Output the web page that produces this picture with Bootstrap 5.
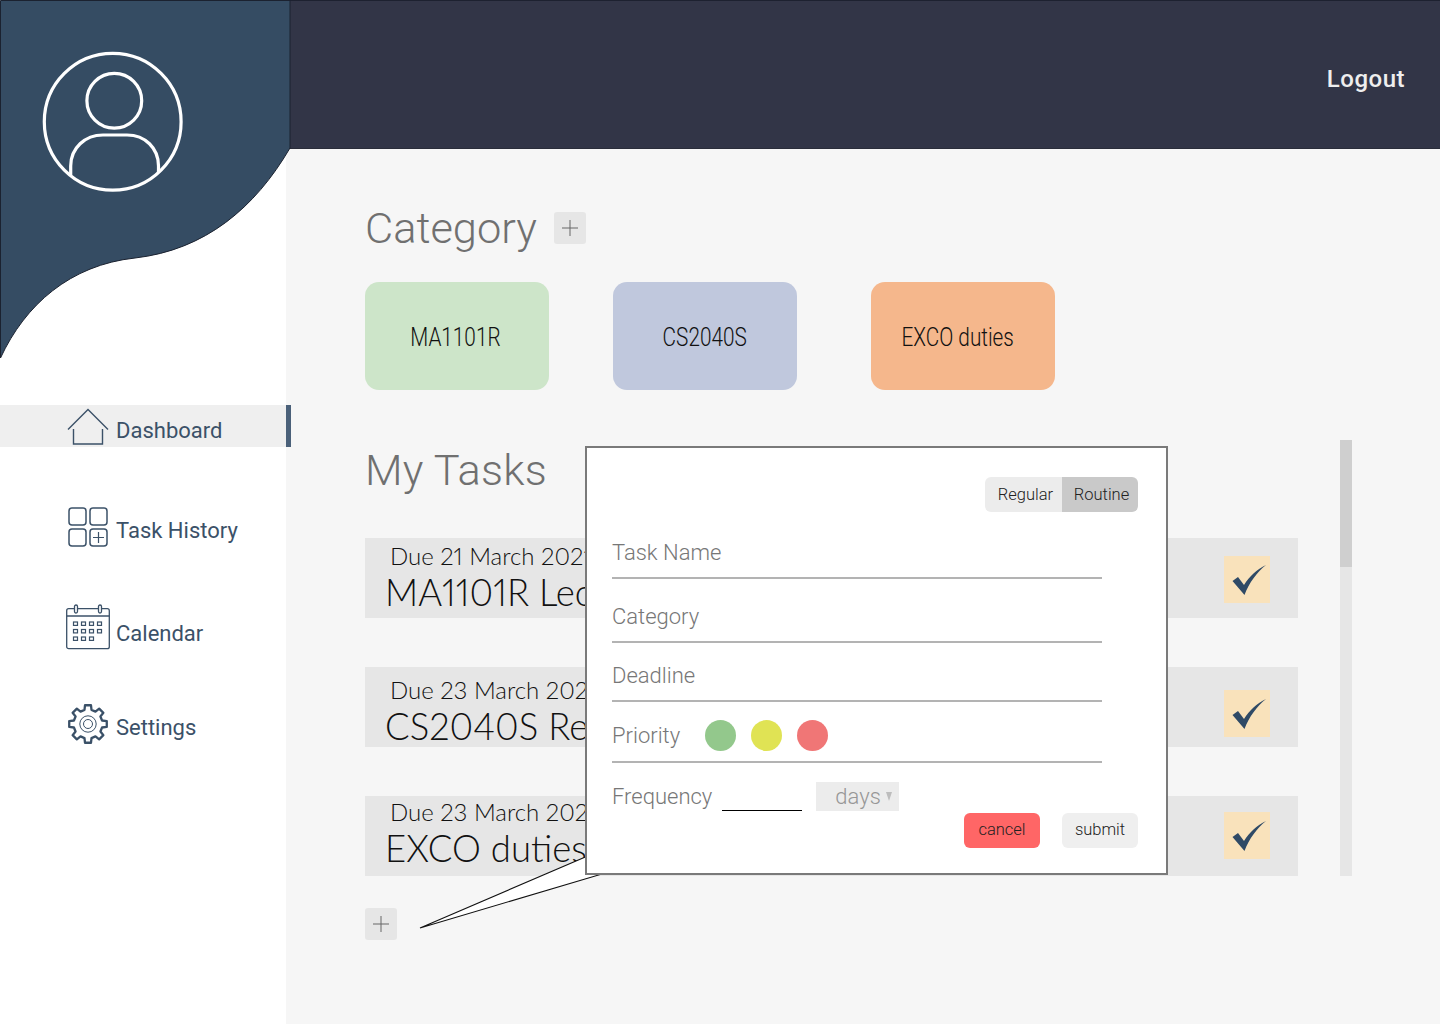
<!DOCTYPE html>
<html lang="en">
<head>
<meta charset="utf-8">
<title>Dashboard</title>
<link href="https://cdn.jsdelivr.net/npm/bootstrap@5.3.0/dist/css/bootstrap.min.css" rel="stylesheet">
<style>
html,body{height:1024px;overflow:hidden}
body{font-family:Roboto,"Liberation Sans",sans-serif;background:#fff}
.shell{height:1024px}
.side{width:286px;flex:none;padding-top:405px;background:#fff}
.blob{position:absolute;left:0;top:0;z-index:3}
.side-link{display:flex;align-items:center;height:42px;width:286px;padding:0;color:#3b5168;font-size:22px;text-decoration:none;position:relative}
.side-link.on{background:#efefef;width:291px;border-right:5px solid #4a6079;z-index:2;padding-top:9px}
.side-link.on .ico-slot{margin-top:-9px}
.side-link.hist{margin-top:63px}
.side-link.hist .txt{margin-top:-2px}
.side-link.cal{margin-top:60px}
.side-link.set{margin-top:52px}
.ico-slot{width:116px;flex:none;position:relative;height:42px}
.ico-slot svg{position:absolute;fill:none;stroke:#3b5168}
.main{flex:1;background:#f6f6f6;position:relative;min-width:0}
.topbar{height:149px;background:#323547;border-top:1px solid #1d2130;border-bottom:1px solid #2a2d3a;padding:8px 35px 0 0;color:#eee;font-size:24px;font-weight:500;letter-spacing:.5px}
.content{padding:48px 0 0 79px}
.big-h{font-size:43.4px;font-weight:300;color:#707070;line-height:64px;margin:0}
.sq-btn{width:32px;height:32px;padding:0;background:#e6e6e6;border:0;border-radius:3px;display:flex;align-items:center;justify-content:center}
.sq-top{margin:-3px 0 0 17px}
.cat-row{margin-top:21px}
.cat-tile{width:184px;height:108px;border-radius:14px;font-size:25px;font-weight:300;color:#111;padding-top:3px}
.cat-tile span{display:inline-block;transform:scaleX(.83);white-space:nowrap}
.t-green{background:#cde5c9;padding-right:4px}.t-blue{background:#c0c8dd;margin-left:64px}.t-orange{background:#f5b78c;margin-left:74px;padding-right:10px}
.tasks-zone{margin-top:50px}
.tasks-col{width:933px}
.task-head{margin-top:-3px;height:68px}
.task-head .big-h{letter-spacing:.25px}
.task-row{height:80px;background:#e6e6e6;padding-right:28px;overflow:hidden}
.task-row+.task-row{margin-top:49px}
.first-row{margin-top:33px}
.task-text{width:222px;overflow:hidden;padding-left:20px;white-space:nowrap;font-family:Lato,"Open Sans",sans-serif;font-weight:300;color:#111;font-variant-numeric:proportional-nums}
.tt1{padding-top:5px}.tt2{padding-top:10px}.tt3{padding-top:3px}
.due{font-size:24px;line-height:26px;padding-left:5px}
.ttl{font-size:36.5px;line-height:46px}
.chk{width:46px;height:47px;background:#f9e2bb;flex:none}
.chk1{margin-top:18px}.chk2{margin-top:23px}.chk3{margin-top:16px}
.sbar{width:12px;height:436px;margin-left:42px;background:#e6e6e6}
.sthumb{height:127px;background:#cfcfcf}
.add-low{margin-top:32px}
.tail{position:absolute;left:131px;top:855px;z-index:4}
.pop{position:absolute;left:299px;top:446px;width:583px;height:429px;background:#fff;border:2px solid #7a7a7a;padding:29px 28px 0 24px;z-index:5;font-weight:300;color:#777;font-size:22px}
.seg .btn{height:35px;font-size:16.5px;font-weight:300;color:#222;border:0;padding:1px 0 0 3px;background:#ececec}
.seg .s1{width:78px;border-radius:6px 0 0 6px}
.seg .s2{width:76px;background:#c9c9c9;border-radius:6px}
.fld{width:490px;margin-left:1px;border-bottom:2px solid #b3b3b3;line-height:26px;padding-bottom:11px}
.f1{height:67px}.f2{height:64px}.f3{height:59px}.f4{height:61px;padding-bottom:10px}
.f4 .lbl{margin-bottom:2px}
.dot{width:31px;height:31px;border-radius:50%;margin-left:15px}
.dot.first{margin-left:25px}
.d-g{background:#93c88c}.d-y{background:#e0e354}.d-r{background:#f07676}
.freq{margin-top:19px;height:29px;padding-left:1px}
.blank{width:80px;height:29px;border-bottom:1px solid #000;margin:0 14px 0 10px}
.dd{width:83px;height:29px;background:#ececec;color:#979797;padding-left:19px}
.caret-tri{width:0;height:0;border-left:3.5px solid transparent;border-right:3.5px solid transparent;border-top:9px solid #bdbdbd;margin-left:5px}
.acts{margin-top:2px}
.act{width:76px;height:35px;padding:0;font-size:16.5px;font-weight:300;border:0;border-radius:6px;color:#222}
.a-c{background:#ff6666}.a-s{background:#efefef;margin-left:22px}
</style>
</head>
<body>
<svg class="blob" width="292" height="362" viewBox="0 0 292 362">
  <path d="M.5.5H290V148C255 208 205 250 135 258C70 265 25 305 .5 358Z" fill="#354c63" stroke="#1b2230" stroke-width="1"/>
  <g fill="none" stroke="#fff" stroke-width="3.2">
    <circle cx="112.700" cy="121.700" r="68.400"/>
    <circle cx="114.300" cy="100.800" r="27.400"/>
    <path d="M70.700 175V166C70.700 148 85 135 103 135H127C145 135 158.500 148 158.500 166V173"/>
  </g>
</svg>
<div class="shell d-flex">
  <aside class="side">
    <nav class="d-flex flex-column">
      <a class="side-link on" href="#"><span class="ico-slot"><svg style="left:67px;top:3px" width="42" height="37" viewBox="0 0 42 37" stroke-width="1.4"><path d="M1 21.500 21 1.500 41 21.500M6.500 21V36H35.500V21"/></svg></span>Dashboard</a>
      <a class="side-link hist" href="#"><span class="ico-slot"><svg style="left:68px;top:-3px" width="40" height="40" viewBox="0 0 40 40" stroke-width="1.5"><rect x="1" y="1" width="17" height="17" rx="3"/><rect x="22" y="1" width="17" height="17" rx="3"/><rect x="1" y="22" width="17" height="17" rx="3"/><rect x="22" y="22" width="17" height="17" rx="3"/><path d="M25 30.500H36M30.500 25V36" stroke-width="1.200"/></svg></span><span class="txt">Task History</span></a>
      <a class="side-link cal" href="#"><span class="ico-slot"><svg style="left:66px;top:-8px" width="44" height="46" viewBox="0 0 44 46" stroke-width="1.3"><rect x=".7" y="4.700" width="42.600" height="40" rx="2"/><path d="M.7 12H43.300"/><rect x="8.500" y="1" width="3" height="8" rx="1.500" fill="#fff"/><rect x="32.500" y="1" width="3" height="8" rx="1.500" fill="#fff"/><g stroke-width="1.200"><rect x="7.500" y="18" width="4" height="3.400"/><rect x="15.500" y="18" width="4" height="3.400"/><rect x="23.500" y="18" width="4" height="3.400"/><rect x="31.500" y="18" width="4" height="3.400"/><rect x="7.500" y="25.500" width="4" height="3.400"/><rect x="15.500" y="25.500" width="4" height="3.400"/><rect x="23.500" y="25.500" width="4" height="3.400"/><rect x="31.500" y="25.500" width="4" height="3.400"/><rect x="7.500" y="33" width="4" height="3.400"/><rect x="15.500" y="33" width="4" height="3.400"/><rect x="23.500" y="33" width="4" height="3.400"/></g></svg></span>Calendar</a>
      <a class="side-link set" href="#"><span class="ico-slot"><svg style="left:68px;top:-2px" width="40" height="40" viewBox="-20 -20 40 40" stroke-width="2.300" stroke-linejoin="round"><polygon points="-3.510,-14.070 -2.970,-18.770 2.970,-18.770 3.510,-14.070 7.470,-12.430 11.170,-15.370 15.370,-11.170 12.430,-7.470 14.070,-3.510 18.770,-2.970 18.770,2.970 14.070,3.510 12.430,7.470 15.370,11.170 11.170,15.370 7.470,12.430 3.510,14.070 2.970,18.770 -2.970,18.770 -3.510,14.070 -7.470,12.430 -11.170,15.370 -15.370,11.170 -12.430,7.470 -14.070,3.510 -18.770,2.970 -18.770,-2.970 -14.070,-3.510 -12.430,-7.470 -15.370,-11.170 -11.170,-15.370 -7.470,-12.430"/><circle r="8.200" stroke-width="1"/><circle r="4.500" stroke-width="1"/></svg></span>Settings</a>
    </nav>
  </aside>
  <main class="main">
    <header class="topbar d-flex align-items-center justify-content-end">Logout</header>
    <div class="content">
      <div class="d-flex align-items-center">
        <h2 class="big-h">Category</h2>
        <button class="sq-btn sq-top" type="button" aria-label="Add category"><svg width="18" height="18" viewBox="0 0 18 18"><path d="M1 9H17M9 1V17" stroke="#666" stroke-width="1"/></svg></button>
      </div>
      <div class="cat-row d-flex">
        <div class="cat-tile t-green d-flex align-items-center justify-content-center"><span>MA1101R</span></div>
        <div class="cat-tile t-blue d-flex align-items-center justify-content-center"><span>CS2040S</span></div>
        <div class="cat-tile t-orange d-flex align-items-center justify-content-center"><span>EXCO duties</span></div>
      </div>
      <div class="tasks-zone d-flex">
        <div class="tasks-col">
          <div class="task-head d-flex align-items-center"><h2 class="big-h">My Tasks</h2></div>
          <div class="task-row first-row d-flex justify-content-between">
            <div class="task-text tt1"><div class="due">Due 21 March 2021</div><div class="ttl">MA1101R Lecture</div></div>
            <div class="chk chk1"><svg width="46" height="47" viewBox="0 0 46 47"><path d="M8.500 25 14 21 20 29C25 21 33 13 42 9 33 16 25 27 20.500 39Z" fill="#2f4a66"/></svg></div>
          </div>
          <div class="task-row d-flex justify-content-between">
            <div class="task-text tt2"><div class="due">Due 23 March 2021</div><div class="ttl">CS2040S Revision</div></div>
            <div class="chk chk2"><svg width="46" height="47" viewBox="0 0 46 47"><path d="M8.500 25 14 21 20 29C25 21 33 13 42 9 33 16 25 27 20.500 39Z" fill="#2f4a66"/></svg></div>
          </div>
          <div class="task-row d-flex justify-content-between">
            <div class="task-text tt3"><div class="due">Due 23 March 2021</div><div class="ttl">EXCO duties</div></div>
            <div class="chk chk3"><svg width="46" height="47" viewBox="0 0 46 47"><path d="M8.500 25 14 21 20 29C25 21 33 13 42 9 33 16 25 27 20.500 39Z" fill="#2f4a66"/></svg></div>
          </div>
        </div>
        <div class="sbar"><div class="sthumb"></div></div>
      </div>
      <button class="sq-btn add-low" type="button" aria-label="Add task"><svg width="18" height="18" viewBox="0 0 18 18"><path d="M1 9H17M9 1V17" stroke="#666" stroke-width="1"/></svg></button>
    </div>
    <svg class="tail" width="190" height="76" viewBox="0 0 190 76"><polygon points="3,73 173,0 185,19" fill="#fff" stroke="#111" stroke-width="1.100"/></svg>
    <section class="pop">
      <div class="d-flex justify-content-end">
        <div class="seg btn-group" role="group"><button class="btn s1" type="button">Regular</button><button class="btn s2" type="button">Routine</button></div>
      </div>
      <div class="fld f1 d-flex align-items-end">Task Name</div>
      <div class="fld f2 d-flex align-items-end">Category</div>
      <div class="fld f3 d-flex align-items-end">Deadline</div>
      <div class="fld f4 d-flex align-items-end"><span class="lbl">Priority</span><span class="dot first d-g"></span><span class="dot d-y"></span><span class="dot d-r"></span></div>
      <div class="freq d-flex align-items-center"><span>Frequency</span><span class="blank"></span><span class="dd d-flex align-items-center">days<span class="caret-tri"></span></span></div>
      <div class="acts d-flex justify-content-end"><button class="act a-c" type="button">cancel</button><button class="act a-s" type="button">submit</button></div>
    </section>
  </main>
</div>
<script src="https://cdn.jsdelivr.net/npm/bootstrap@5.3.0/dist/js/bootstrap.bundle.min.js"></script>
</body>
</html>
